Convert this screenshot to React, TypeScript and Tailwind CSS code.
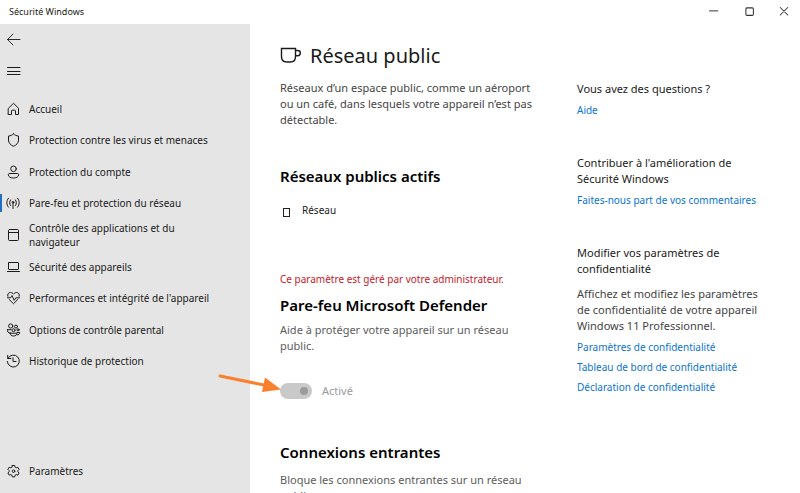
import type { ReactNode } from 'react';

function Icon({ children, className = 'size-4' }: { children: ReactNode; className?: string }) {
  return (
    <svg
      aria-hidden="true"
      viewBox="0 0 16 16"
      fill="none"
      stroke="currentColor"
      strokeLinecap="round"
      strokeLinejoin="round"
      className={`shrink-0 ${className}`}
    >
      {children}
    </svg>
  );
}

const navItems: { label: string; active?: boolean; icon: ReactNode }[] = [
  {
    label: 'Accueil',
    icon: <path d="M3.500 7.200 8.500 2.300l5 4.900v6.300h-3V10c0-.5-.3-.8-.8-.8H7.300c-.5 0-.8.3-.8.8v3.500h-3z" />,
  },
  {
    label: 'Protection contre les virus et menaces',
    icon: <path d="M8.500 1.800C9.800 3.200 11.600 3.900 13.500 4v4c0 3-2 5-5 6.300C5.500 13 3.500 11 3.500 8V4c1.900-.1 3.700-.8 5-2.200z" />,
  },
  {
    label: 'Protection du compte',
    icon: (
      <>
        <circle cx="8.500" cy="4.800" r="2.800" />
        <path d="M4.500 9.500h8c.8 0 1.200.5 1.200 1.200 0 2.100-2.200 3.300-5.200 3.300s-5.200-1.200-5.200-3.300c0-.7.4-1.200 1.200-1.200z" />
      </>
    ),
  },
  {
    label: 'Pare-feu et protection du réseau',
    active: true,
    icon: (
      <>
        <path d="M3.500 3.200c-2.300 2.700-2.300 6.300 0 9M5.600 4.900c-1.300 1.700-1.300 4 0 5.700M12.500 3.200c2.300 2.700 2.300 6.300 0 9M10.400 4.900c1.300 1.700 1.300 4 0 5.700M8 8v5.500" />
        <circle cx="8" cy="7.300" r="0.900" />
      </>
    ),
  },
  {
    label: 'Contrôle des applications et du navigateur',
    icon: (
      <>
        <rect x="3.500" y="2.500" width="10" height="11" rx="1" />
        <path d="M3.500 5.500h10" />
      </>
    ),
  },
  {
    label: 'Sécurité des appareils',
    icon: (
      <>
        <rect x="3.500" y="3.500" width="10" height="7" rx="0.500" />
        <path d="M2.500 12.500h12" />
      </>
    ),
  },
  {
    label: "Performances et intégrité de l'appareil",
    icon: (
      <>
        <path d="M2.800 6.300C2.200 4.200 3.500 2.500 5.400 2.500 6.900 2.500 8 3.300 8.500 4.200c.5-.9 1.600-1.700 3.100-1.700 1.900 0 3.200 1.700 2.600 3.800M4.200 9.500l4.300 4.200 4.300-4.200" />
        <path d="M2.500 7.800h3L7 5.500l2.200 4.800 1.700-2.500h3.600" />
      </>
    ),
  },
  {
    label: 'Options de contrôle parental',
    icon: (
      <>
        <circle cx="5.700" cy="4" r="2.100" />
        <circle cx="11" cy="4.600" r="1.500" />
        <circle cx="8.500" cy="8.200" r="1.500" />
        <circle cx="13" cy="7.800" r="1.100" />
        <path d="M2.500 7.700h3.600M2.500 7.700c-.3 2 .7 3.300 2.500 3.500M5.200 11.200h6.600c0 1.800-1.300 2.800-3.300 2.800s-3.300-1-3.300-2.800zM12.200 10.500h2.500c0 1.500-.9 2.400-2.500 2.400" />
      </>
    ),
  },
  {
    label: 'Historique de protection',
    icon: <path d="M2.700 2.300v3.200h3.200M3 5.200a6 6 0 1 1-.7 3.300M8 4.800v3.700h3" />,
  },
];

function Link({ children }: { children: ReactNode }) {
  return (
    <a href="#" className="block text-[#0a74cc] hover:underline">
      {children}
    </a>
  );
}

function TitleBar() {
  return (
    <header className="flex h-6 shrink-0 items-center justify-between bg-white pl-[9px]">
      <span className="text-[9px]">Sécurité Windows</span>
      <div className="flex text-[#333]">
        <button type="button" aria-label="Réduire" className="grid h-6 w-9 place-items-center">
          <Icon className="size-3">
            <path d="M2 6.500h11" strokeWidth="1.300" />
          </Icon>
        </button>
        <button type="button" aria-label="Agrandir" className="grid h-6 w-9 place-items-center">
          <Icon className="size-3">
            <rect x="2.500" y="2.500" width="10" height="10" rx="1.500" strokeWidth="1.400" />
          </Icon>
        </button>
        <button type="button" aria-label="Fermer" className="grid h-6 w-8 place-items-center">
          <Icon className="size-3">
            <path d="m3 2 10 10M13 2 3 12" strokeWidth="1.400" />
          </Icon>
        </button>
      </div>
    </header>
  );
}

function Sidebar() {
  return (
    <div className="flex w-[250px] shrink-0 flex-col bg-[#e5e5e5] text-[10px] leading-[14px]">
      <button type="button" aria-label="Retour" className="flex h-8 items-center pl-1.5">
        <Icon>
          <path d="M1.500 7.500h12.500M7 2 1.500 7.500 7 13" strokeWidth="0.900" />
        </Icon>
      </button>
      <button type="button" aria-label="Menu" className="flex h-8 items-center pl-1.5">
        <Icon>
          <path d="M1.500 3.500h12.500M1.500 7.500h12.500M1.500 10.500h12.500" />
        </Icon>
      </button>
      <nav className="mt-[5px] grid h-71 auto-rows-fr">
        {navItems.map((item) => (
          <a
            key={item.label}
            href="#"
            aria-current={item.active ? 'page' : undefined}
            className="relative flex items-center gap-2 pr-8 pl-[5px]"
          >
            {item.active && <span className="absolute left-0 h-[18px] w-0.5 bg-[#1f6fc4]" />}
            <Icon>{item.icon}</Icon>
            <span>{item.label}</span>
          </a>
        ))}
      </nav>
      <a href="#" className="mt-auto mb-1.5 flex h-8 items-center gap-2 pl-[5px]">
        <Icon>
          <path d="M7.300 2.500h2.400l.4 1.700 1.100.6 1.700-.5 1.200 2.100-1.200 1.200v1.200l1.200 1.200-1.200 2.100-1.700-.5-1.100.6-.4 1.700H7.300l-.4-1.700-1.100-.6-1.700.5-1.200-2.100 1.200-1.200V7.600L2.900 6.400l1.200-2.100 1.700.5 1.100-.6z" />
          <circle cx="8.500" cy="8.200" r="1.300" />
        </Icon>
        <span>Paramètres</span>
      </a>
    </div>
  );
}

function FirewallSwitch() {
  return (
    <div className="relative mt-[29px] flex items-center gap-2.5">
      <input
        id="firewall"
        type="checkbox"
        role="switch"
        defaultChecked
        disabled
        className="flex h-4 w-8 appearance-none items-center justify-end rounded-full bg-[#c9c9c9] px-1 before:size-2 before:rounded-full before:bg-[#9b9b9b]"
      />
      <label htmlFor="firewall" className="text-[#9a9a9a]">
        Activé
      </label>
      <svg aria-hidden="true" viewBox="0 0 64 20" className="absolute -top-2.5 -left-[62px] h-5 w-16 text-[#f9802d]">
        <path d="m2 3 44 9" stroke="currentColor" strokeWidth="3" strokeLinecap="round" />
        <path d="m47 4.500-3 14.500 19-2.500z" fill="currentColor" />
      </svg>
    </div>
  );
}

export default function App() {
  return (
    <div className="flex h-screen flex-col overflow-hidden bg-white font-['Noto_Sans','Open_Sans',sans-serif] text-[#1a1a1a]">
      <TitleBar />
      <div className="flex min-h-0 flex-1">
        <Sidebar />
        <div className="flex flex-1 gap-8 pr-6 pl-[30px] text-[11px] leading-4">
          <main className="w-[265px] shrink-0 pt-4">
            <h1 className="flex items-center gap-2 text-xl leading-8">
              <svg aria-hidden="true" viewBox="0 0 22 18" fill="none" stroke="currentColor" strokeWidth="1.400" className="h-[18px] w-[22px]">
                <path d="M1.500 1.500h14v8c0 3.500-2 5.500-5 5.500h-4c-3 0-5-2-5-5.500zM15.500 3.500h2.200c1.600 0 2.600 1 2.600 2.500s-1 2.700-2.600 2.700h-2.200" />
              </svg>
              Réseau public
            </h1>
            <p className="mt-2 text-[#444]">
              Réseaux d’un espace public, comme un aéroport ou un café, dans lesquels votre appareil n’est pas détectable.
            </p>
            <h2 className="mt-9 text-[15px] leading-6 font-semibold text-black">Réseaux publics actifs</h2>
            <div className="mt-3.5 flex items-center gap-3 pl-[3px] text-[10px]">
              <span className="mt-1 h-[9px] w-[7px] border border-[#222]" />
              Réseau
            </div>
            <p className="mt-[53px] text-[10px] text-[#c4202a]">Ce paramètre est géré par votre administrateur.</p>
            <h2 className="mt-1.5 text-[15px] leading-6 font-semibold text-black">Pare-feu Microsoft Defender</h2>
            <p className="mt-[5px] text-[#5c5c5c]">Aide à protéger votre appareil sur un réseau public.</p>
            <FirewallSwitch />
            <h2 className="mt-[41px] text-[15px] leading-6 font-semibold text-black">Connexions entrantes</h2>
            <p className="mt-2 text-[#5c5c5c]">Bloque les connexions entrantes sur un réseau public.</p>
          </main>
          <aside className="w-[194px] pt-[57px]">
            <h3>Vous avez des questions ?</h3>
            <div className="mt-[5px] text-[10px]">
              <Link>Aide</Link>
            </div>
            <h3 className="mt-[37px]">Contribuer à l'amélioration de Sécurité Windows</h3>
            <div className="mt-[5px] text-[10px]">
              <Link>Faites-nous part de vos commentaires</Link>
            </div>
            <h3 className="mt-[37px]">Modifier vos paramètres de confidentialité</h3>
            <p className="mt-[9px] text-[#444]">
              Affichez et modifiez les paramètres de confidentialité de votre appareil Windows 11 Professionnel.
            </p>
            <div className="mt-[5px] flex flex-col gap-1 text-[10px]">
              <Link>Paramètres de confidentialité</Link>
              <Link>Tableau de bord de confidentialité</Link>
              <Link>Déclaration de confidentialité</Link>
            </div>
          </aside>
        </div>
      </div>
    </div>
  );
}
